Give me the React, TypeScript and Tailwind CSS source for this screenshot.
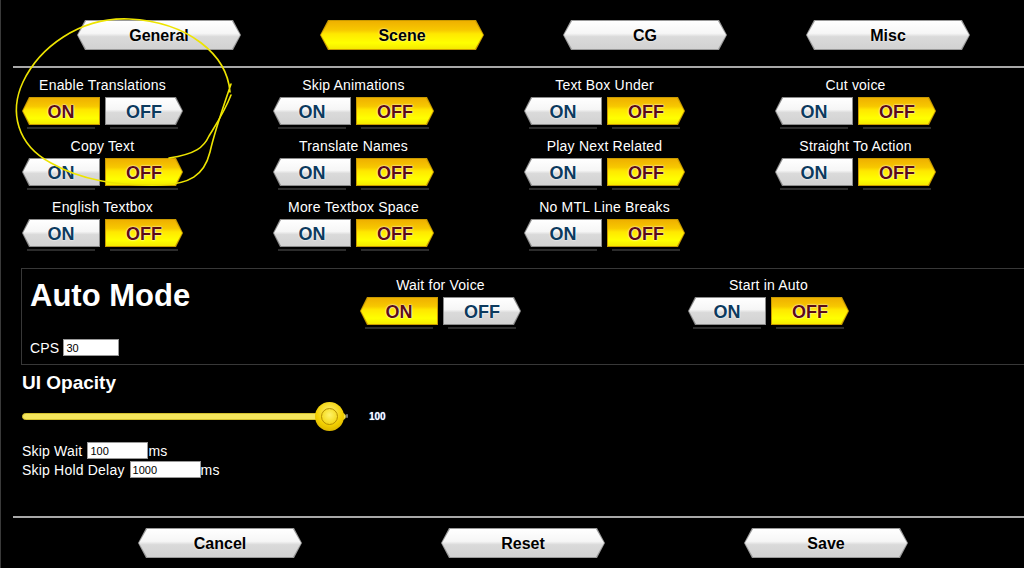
import type { ReactNode } from "react";

const FONT = "font-['Liberation_Sans',Arial,sans-serif]";

const YELLOW =
  "bg-[linear-gradient(to_bottom,#efb000_0%,#f7c800_32%,#ffe800_46%,#ffff00_78%,#f4ea00_100%)]";
const WHITE =
  "bg-[linear-gradient(to_bottom,#ffffff_0%,#f6f6f6_44%,#dadada_56%,#d2d2d2_100%)]";

const CLIP_LEFT = "[clip-path:polygon(7px_0,100%_0,100%_100%,7px_100%,0_50%)]";
const CLIP_RIGHT =
  "[clip-path:polygon(0_0,calc(100%-7px)_0,100%_50%,calc(100%-7px)_100%,0_100%)]";
const CLIP_BOTH =
  "[clip-path:polygon(8px_0,calc(100%-8px)_0,100%_50%,calc(100%-8px)_100%,8px_100%,0_50%)]";

function Pill({
  side,
  active,
  children,
}: {
  side: "left" | "right";
  active: boolean;
  children: ReactNode;
}) {
  const clip = side === "left" ? CLIP_LEFT : CLIP_RIGHT;
  return (
    <div className="flex flex-col">
      <div
        className={`h-[28px] w-[78px] p-px ${clip} ${
          active ? "bg-[#c99a00]" : "bg-[#8c8c8c]"
        }`}
      >
        <div
          className={`flex h-full w-full items-center justify-center pt-[2px] ${clip} ${
            active ? YELLOW : WHITE
          }`}
        >
          <span
            className={`text-[18px] font-bold leading-none [text-shadow:0_0_2px_#fff,0_0_1px_#fff] ${
              active ? "text-[#5c0c14]" : "text-[#0c3a5e]"
            }`}
          >
            {children}
          </span>
        </div>
      </div>
      <div className="mx-[5px] mt-[2px] h-[2px] bg-[#2c2c2c]" />
    </div>
  );
}

function Toggle({ label, on }: { label: string; on: boolean }) {
  return (
    <div className="flex w-[161px] flex-col items-center">
      <span className="h-4 text-[14px] leading-4 tracking-[0.2px] whitespace-nowrap text-white">
        {label}
      </span>
      <div className="mt-1 flex gap-[5px]">
        <Pill side="left" active={on}>
          ON
        </Pill>
        <Pill side="right" active={!on}>
          OFF
        </Pill>
      </div>
    </div>
  );
}

function BigButton({ label, active = false }: { label: string; active?: boolean }) {
  return (
    <div className={`h-[30px] w-[164px] p-px ${CLIP_BOTH} ${active ? "bg-[#c99a00]" : "bg-[#9a9a9a]"}`}>
      <div
        className={`flex h-full w-full items-center justify-center pt-[2px] ${CLIP_BOTH} ${
          active ? YELLOW : WHITE
        }`}
      >
        <span className="text-[16px] font-bold leading-none text-black [text-shadow:0_0_2px_#fff]">
          {label}
        </span>
      </div>
    </div>
  );
}

const toggles = [
  { label: "Enable Translations", on: true },
  { label: "Skip Animations", on: false },
  { label: "Text Box Under", on: false },
  { label: "Cut voice", on: false },
  { label: "Copy Text", on: false },
  { label: "Translate Names", on: false },
  { label: "Play Next Related", on: false },
  { label: "Straight To Action", on: false },
  { label: "English Textbox", on: false },
  { label: "More Textbox Space", on: false },
  { label: "No MTL Line Breaks", on: false },
];

export default function App() {
  return (
    <div
      className={`relative h-[568px] w-[1024px] overflow-hidden border-l border-[#3a3a3a] bg-black ${FONT}`}
    >
      {/* tabs */}
      <div className="flex gap-[79px] pt-5 pl-[76px]">
        <BigButton label="General" />
        <BigButton label="Scene" active />
        <BigButton label="CG" />
        <BigButton label="Misc" />
      </div>
      <div className="mt-4 ml-3 h-[2px] bg-[#a8a8a8]" />

      {/* scene toggles */}
      <div className="grid grid-cols-[251px_251px_251px_251px] gap-y-[9px] pt-[9px] pl-[21px]">
        {toggles.map((t) => (
          <Toggle key={t.label} label={t.label} on={t.on} />
        ))}
      </div>

      {/* auto mode */}
      <div className="mt-[17px] ml-5 flex h-[97px] border border-r-0 border-[#383838]">
        <div className="flex w-[338px] flex-col pt-[11px] pl-2">
          <h2 className="text-[31px] leading-[31px] font-bold text-white">Auto Mode</h2>
          <div className="mt-[28px] flex items-center gap-1 text-[14px] leading-4 tracking-[0.2px] text-white">
            <span>CPS</span>
            <div className="flex h-[17px] w-[56px] items-center border border-[#999] bg-white px-[2px] text-[11px] tracking-normal text-black">
              30
            </div>
          </div>
        </div>
        <div className="flex gap-[167px] pt-2">
          <Toggle label="Wait for Voice" on />
          <Toggle label="Start in Auto" on={false} />
        </div>
      </div>

      {/* ui opacity */}
      <div className="mt-[7px] pl-[21px]">
        <h3 className="text-[19px] leading-[22px] font-bold text-white">UI Opacity</h3>
        <div className="mt-[7px] flex h-[30px] items-center">
          <div className="relative flex h-[30px] w-[324px] items-center">
            <div className="h-[7px] w-full rounded-full border border-[#d4c230] bg-[#f4e55c]" />
            <div className="absolute top-[0.5px] left-[293px] flex h-[29px] w-[29px] items-center justify-center rounded-full bg-[radial-gradient(circle_at_50%_35%,#fff27a_0%,#f3d000_55%,#c8a000_100%)]">
              <div className="h-[17px] w-[17px] rounded-full border border-[#b58f00] bg-[radial-gradient(circle_at_50%_40%,#fff36a_0%,#f0d000_100%)]" />
            </div>
            <div className="absolute top-[13px] right-[-2px] h-[4px] w-[2px] rounded-full bg-[#777]" />
          </div>
          <span className="ml-[23px] text-[10px] font-bold text-white [text-shadow:0_0_1px_#6aa0ff]">
            100
          </span>
        </div>

        <div className="mt-[10px] flex h-[19px] items-center text-[14px] leading-4 tracking-[0.2px] text-white">
          <span>Skip Wait</span>
          <div className="ml-[5px] flex h-[17px] w-[61px] items-center border border-[#999] bg-white px-[2px] text-[11px] tracking-normal text-black">
            100
          </div>
          <span>ms</span>
        </div>
        <div className="flex h-[19px] items-center text-[14px] leading-4 tracking-[0.2px] text-white">
          <span>Skip Hold Delay</span>
          <div className="ml-[5px] flex h-[17px] w-[71px] items-center border border-[#999] bg-white px-[2px] text-[11px] tracking-normal text-black">
            1000
          </div>
          <span>ms</span>
        </div>
      </div>

      <div className="mt-[37px] ml-3 h-[2px] bg-[#a8a8a8]" />

      {/* footer buttons */}
      <div className="mt-[10px] flex gap-[139px] pl-[137px]">
        <BigButton label="Cancel" />
        <BigButton label="Reset" />
        <BigButton label="Save" />
      </div>

      {/* hand-drawn highlight */}
      <svg
        className="pointer-events-none absolute top-0 left-0"
        width="240"
        height="200"
        viewBox="0 0 240 200"
        fill="none"
        stroke="#ede400"
        strokeWidth="1.6"
        strokeLinecap="round"
      >
        <path d="M229 92 C226 55 188 22 128 19 C78 17 38 48 22 82 C8 112 16 145 50 163 C80 180 115 186 160 185 C188 184 203 176 209 152 C214 130 222 108 230 84" />
        <path d="M230 95 C223 113 214 126 208 136 C203 147 195 154 168 158" />
      </svg>
    </div>
  );
}
